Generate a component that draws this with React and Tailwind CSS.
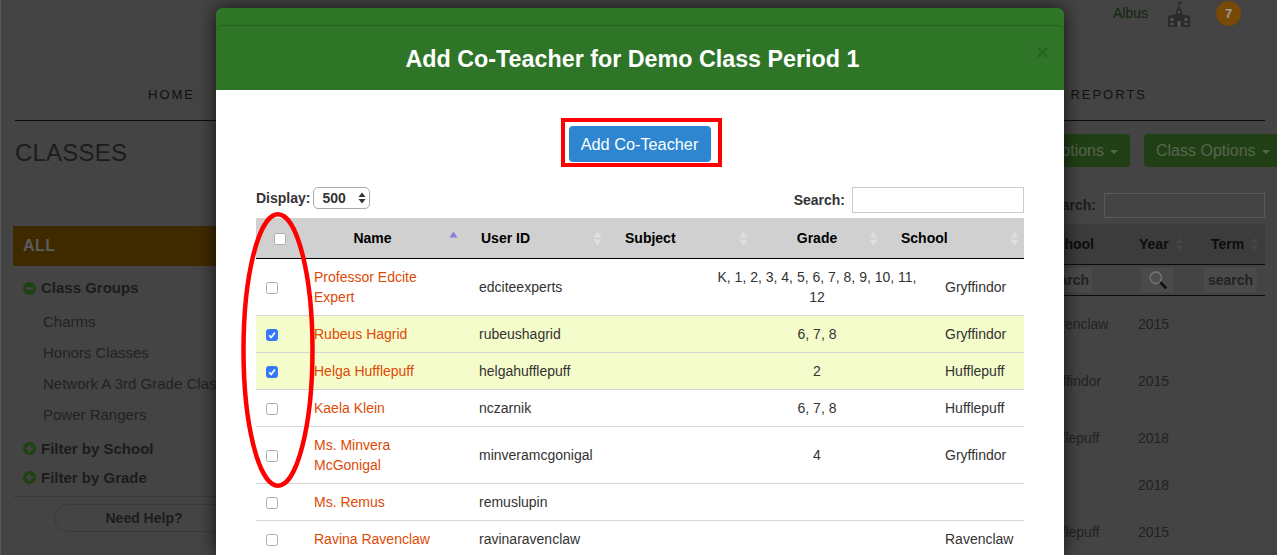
import React from "react";

const teachers = [
  { name: ["Professor Edcite", "Expert"], id: "edciteexperts", grade: ["K, 1, 2, 3, 4, 5, 6, 7, 8, 9, 10, 11,", "12"], school: "Gryffindor", h: "h-[57px]" },
  { name: ["Rubeus Hagrid"], id: "rubeushagrid", grade: ["6, 7, 8"], school: "Gryffindor", h: "h-[37px]", checked: true },
  { name: ["Helga Hufflepuff"], id: "helgahufflepuff", grade: ["2"], school: "Hufflepuff", h: "h-[37px]", checked: true },
  { name: ["Kaela Klein"], id: "nczarnik", grade: ["6, 7, 8"], school: "Hufflepuff", h: "h-[37px]" },
  { name: ["Ms. Minvera", "McGonigal"], id: "minveramcgonigal", grade: ["4"], school: "Gryffindor", h: "h-[57px]" },
  { name: ["Ms. Remus"], id: "remuslupin", grade: [], school: "", h: "h-[37px]" },
  { name: ["Ravina Ravenclaw"], id: "ravinaravenclaw", grade: [], school: "Ravenclaw", h: "h-[37px]" },
];

const bgRows = [
  { school: "Ravenclaw", year: "2015", h: "h-[57px]" },
  { school: "Gryffindor", year: "2015", h: "h-[57px]" },
  { school: "Hufflepuff", year: "2018", h: "h-[57px]" },
  { school: "", year: "2018", h: "h-[37px]" },
  { school: "Hufflepuff", year: "2015", h: "h-[57px]" },
];

function Box({ checked }) {
  return (
    <span className="relative block h-[12px] w-[12px]">
      <input
        type="checkbox"
        readOnly
        checked={!!checked}
        className="block h-[12px] w-[12px] appearance-none rounded-[2.5px] border border-[#adadad] bg-white checked:border-[#3478f6] checked:bg-[#3478f6]"
      />
      {checked && (
        <svg viewBox="0 0 12 12" className="pointer-events-none absolute inset-0 h-[12px] w-[12px]">
          <path d="M3.2 6.3 5.2 8.4 8.9 3.4" fill="none" stroke="#fff" strokeWidth="1.7" />
        </svg>
      )}
    </span>
  );
}

function SortArrows({ active, color = "#dfdfdf", className }) {
  return (
    <svg viewBox="0 0 9 15" className={"h-[15px] w-[9px] " + className}>
      <path d="M4.5 .5 8.5 6.5H.5z" fill={active ? "#8a80e2" : color} />
      {!active && <path d="M4.5 14.5 8.5 8.5H.5z" fill={color} />}
    </svg>
  );
}

function Expander({ open }) {
  return (
    <svg viewBox="0 0 13 13" className="h-[13px] w-[13px] shrink-0">
      <circle cx="6.5" cy="6.5" r="6.5" fill="#1f4213" />
      <path d={open ? "M3 5.3h7v2.4H3z" : "M5.3 3h2.4v2.3H10v2.4H7.7V10H5.3V7.7H3V5.3h2.3z"} fill="#444" />
    </svg>
  );
}

function SchoolIcon() {
  return (
    <svg viewBox="0 0 22 26" className="h-[26px] w-[22px]">
      <path d="M11 0v5" stroke="#2c2c2c" strokeWidth="1" />
      <path d="M11 .5 15 2 11 3.5z" fill="#2c2c2c" />
      <path d="M8 10 11 4l3 6v3l8 2v11H0V15l8-2z" fill="#2c2c2c" />
      <path d="M9.5 26v-6h3v6zM2.5 17h3v3h-3zM2.5 22h3v2h-3zM16.5 17h3v3h-3zM16.5 22h3v2h-3zM10 10h2v2h-2z" fill="#555" />
    </svg>
  );
}

function Magnifier() {
  return (
    <svg viewBox="0 0 18 18" className="h-[20px] w-[20px]">
      <circle cx="7" cy="7" r="5.2" fill="#4f4f4f" stroke="#777" strokeWidth="1.2" />
      <path d="m11 11 5.5 5.5" stroke="#111" strokeWidth="2.4" />
    </svg>
  );
}

function Background() {
  return (
    <div className="h-[555px] overflow-hidden border-l border-[#5a5a5a] bg-[#444] pl-[14px] pr-[12px]">
      <div className="flex h-[27px] items-center justify-end pr-[24px]">
        <span className="text-[14px] text-[#12260f]">Albus</span>
        <span className="ml-[20px]"><SchoolIcon /></span>
        <span className="ml-[26px] flex h-[25px] w-[25px] items-center justify-center rounded-full bg-[#784a05] text-[13px] font-bold text-[#9a9a9a]">7</span>
      </div>
      <div className="mt-[57px] flex h-[37px] justify-between border-b border-[#0a0f0a] pl-[133px] pr-[118px] pt-[1px] text-[13px] tracking-[2px] text-[#111]">
        <span>HOME</span>
        <span>REPORTS</span>
      </div>
      <div className="flex h-[105px] items-start justify-between pt-[13px]">
        <h1 className="pt-[5px] text-[24px] leading-[28px] tracking-[0.2px] text-[#1c1c1c]">CLASSES</h1>
        <div className="-mr-[12px] flex gap-[14px]">
          <span className="flex h-[33px] w-[150px] items-center justify-end rounded-[4px] bg-[#213f14] pr-[12px] text-[16px] text-[#56654f]">
            Options
            <span className="ml-[6px] mt-[2px] border-x-[4px] border-t-[4px] border-x-transparent border-t-[#56654f]" />
          </span>
          <span className="flex h-[33px] w-[133px] items-center rounded-l-[4px] bg-[#213f14] pl-[12px] text-[16px] text-[#56654f]">
            Class Options
            <span className="ml-[6px] mt-[2px] border-x-[4px] border-t-[4px] border-x-transparent border-t-[#56654f]" />
          </span>
        </div>
      </div>
      <div className="-ml-[2px] flex">
        <aside className="w-[261px] shrink-0 whitespace-nowrap">
          <div className="mr-[20px] flex h-[40px] items-center bg-[#3f2a00] pl-[10px] text-[16px] font-bold tracking-[0.5px] text-[#5c5c5c]">ALL</div>
          <div className="mt-[13px] flex items-center gap-[5px] pl-[10px] text-[15px] font-bold leading-[18px] text-[#1c1c1c]"><Expander open /> Class Groups</div>
          <div className="mt-[9px] pl-[30px] text-[15px] leading-[31px] text-[#222]">
            <div>Charms</div>
            <div>Honors Classes</div>
            <div>Network A 3rd Grade Classes</div>
            <div>Power Rangers</div>
          </div>
          <div className="mt-[4px] flex items-center gap-[5px] pl-[10px] text-[15px] font-bold leading-[29px] text-[#1c1c1c]"><Expander /> Filter by School</div>
          <div className="flex items-center gap-[5px] pl-[10px] text-[15px] font-bold leading-[29px] text-[#1c1c1c]"><Expander /> Filter by Grade</div>
          <div className="mr-[20px] mt-[4px] border-t border-[#3a3a3a] pl-[41px] pt-[7px]">
            <div className="flex h-[28px] w-[180px] items-center justify-center rounded-full border border-[#3a3a3a] text-[14px] font-bold text-[#1c1c1c]">Need Help?</div>
          </div>
        </aside>
        <section className="-mt-[33px] min-w-0 flex-1">
          <div className="flex h-[25px] items-center justify-end gap-[8px] text-[14px] font-bold text-[#1c1c1c]">
            Search:
            <span className="h-[25px] w-[161px] border border-[#5a5a5a]" />
          </div>
          <div className="mt-[6px] grid h-[41px] grid-cols-[1fr_72px_68px] items-center border-b border-[#0c0c0c] bg-[#3c3c3c] text-[14px] font-bold text-[#0c0c0c]">
            <span className="pr-[31px] text-right">School</span>
            <span className="flex items-center pl-[14px]">Year<SortArrows color="#454545" className="ml-[6px]" /></span>
            <span className="flex items-center pl-[14px]">Term<SortArrows color="#454545" className="ml-[6px]" /></span>
          </div>
          <div className="grid h-[31px] grid-cols-[1fr_72px_68px] items-center border-b border-[#0c0c0c] text-[14px] font-bold text-[#222]">
            <span className="flex justify-end pr-[33px]"><span className="flex h-[24px] items-center bg-[#4a4a4a] px-[3px]">search</span></span>
            <span className="pl-[16px]"><span className="flex h-[24px] w-[33px] items-center justify-center bg-[#4a4a4a]"><Magnifier /></span></span>
            <span className="pl-[7px]"><span className="flex h-[24px] w-[53px] items-center justify-center bg-[#4a4a4a]">search</span></span>
          </div>
          {bgRows.map((r, i) => (
            <div key={i} className={"grid grid-cols-[1fr_72px_68px] items-center text-[14px] text-[#222] " + r.h}>
              <span className="ml-auto mr-[12px] block w-[73px]">{r.school}</span>
              <span className="pl-[13px]">{r.year}</span>
              <span />
            </div>
          ))}
        </section>
      </div>
    </div>
  );
}

function Modal() {
  return (
    <div className="absolute left-[216px] top-[8px] w-[848px] rounded-t-[6px] bg-[#2e7527] shadow-[0_0_18px_rgba(0,0,0,0.75)]">
      <div className="h-[17px]" />
      <div className="relative flex h-[65px] items-center justify-center rounded-t-[6px] border-t border-[#24601f] bg-[#2e7527] pr-[15px] pt-[2px] text-[23.3px] font-bold text-white">
        Add Co-Teacher for Demo Class Period 1
        <svg viewBox="0 0 10 10" className="absolute right-[16px] top-[21px] h-[11px] w-[11px]">
          <path d="m1 1 8 8M9 1 1 9" stroke="#24641f" strokeWidth="2" />
        </svg>
      </div>
      <div className="h-[465px] overflow-hidden bg-white px-[40px] pt-[28px] text-[14px] text-[#333]">
        <div className="flex justify-center pl-[2px]">
          <div className="border-4 border-[#ff0000] pb-[1px] pl-[4px] pr-[7px] pt-[4px]">
            <button className="block h-[36px] w-[142px] rounded-[4px] bg-[#2d86cf] pt-[1px] text-[16.3px] text-white">Add Co-Teacher</button>
          </div>
        </div>
        <div className="mt-[20px] flex h-[26px] items-start justify-between">
          <label className="flex items-center gap-[3px] font-bold">
            Display:
            <span className="relative block">
              <select className="block h-[22px] w-[57px] appearance-none rounded-[5px] border border-[#aaa] bg-white pl-[8px] font-bold text-[#333]">
                <option>500</option>
              </select>
              <svg viewBox="0 0 8 12" className="pointer-events-none absolute right-[4px] top-[5px] h-[12px] w-[8px]">
                <path d="M4 .5 7.5 5H.5zM4 11.5 7.5 7H.5z" fill="#333" />
              </svg>
            </span>
          </label>
          <label className="flex items-center gap-[7px] font-bold">
            Search:
            <input readOnly className="block h-[26px] w-[172px] border border-[#ccc] bg-white" />
          </label>
        </div>
        <div className="mt-[5px] flex h-[41px] items-center border-b-[1.5px] border-black bg-[#d0d0d0] font-bold text-black">
          <div className="flex w-[48px] justify-center pt-[1px]"><Box /></div>
          <div className="relative flex h-full w-[159px] items-center justify-center pr-[22px]">
            Name
            <SortArrows active className="absolute right-[5px] top-[13px]" />
          </div>
          <div className="relative flex h-full w-[144px] items-center pl-[18px]">
            User ID
            <SortArrows className="absolute right-[5px] top-[13px]" />
          </div>
          <div className="relative flex h-full w-[146px] items-center pl-[18px]">
            Subject
            <SortArrows className="absolute right-[5px] top-[13px]" />
          </div>
          <div className="relative flex h-full w-[130px] items-center justify-center pr-[2px]">
            Grade
            <SortArrows className="absolute right-[5px] top-[13px]" />
          </div>
          <div className="relative flex h-full flex-1 items-center pl-[18px]">
            School
            <SortArrows className="absolute right-[5px] top-[13px]" />
          </div>
        </div>
        {teachers.map((t) => (
          <div
            key={t.id}
            className={"flex items-center border-b border-[#d5d5d5] leading-[20px] " + t.h + (t.checked ? " bg-[#f5fccb]" : "")}
          >
            <div className="w-[48px] pl-[10px] pt-[1px]"><Box checked={t.checked} /></div>
            <div className="w-[165px] pl-[10px] text-[#dd4a06]">
              {t.name.map((n) => <div key={n}>{n}</div>)}
            </div>
            <div className="w-[238px] pl-[10px]">{t.id}</div>
            <div className="w-[220px] text-center">
              {t.grade.map((g) => <div key={g}>{g}</div>)}
            </div>
            <div className="flex-1 pl-[18px]">{t.school}</div>
          </div>
        ))}
      </div>
    </div>
  );
}

export default function App() {
  return (
    <div className="relative h-[555px] overflow-hidden font-['Liberation_Sans',Arial,sans-serif]">
      <Background />
      <Modal />
      <svg viewBox="0 0 76 278" className="pointer-events-none absolute left-[240px] top-[211px] h-[278px] w-[76px]">
        <ellipse cx="38" cy="139" rx="34.5" ry="135.8" fill="none" stroke="#ff0000" strokeWidth="4.5" />
      </svg>
    </div>
  );
}
